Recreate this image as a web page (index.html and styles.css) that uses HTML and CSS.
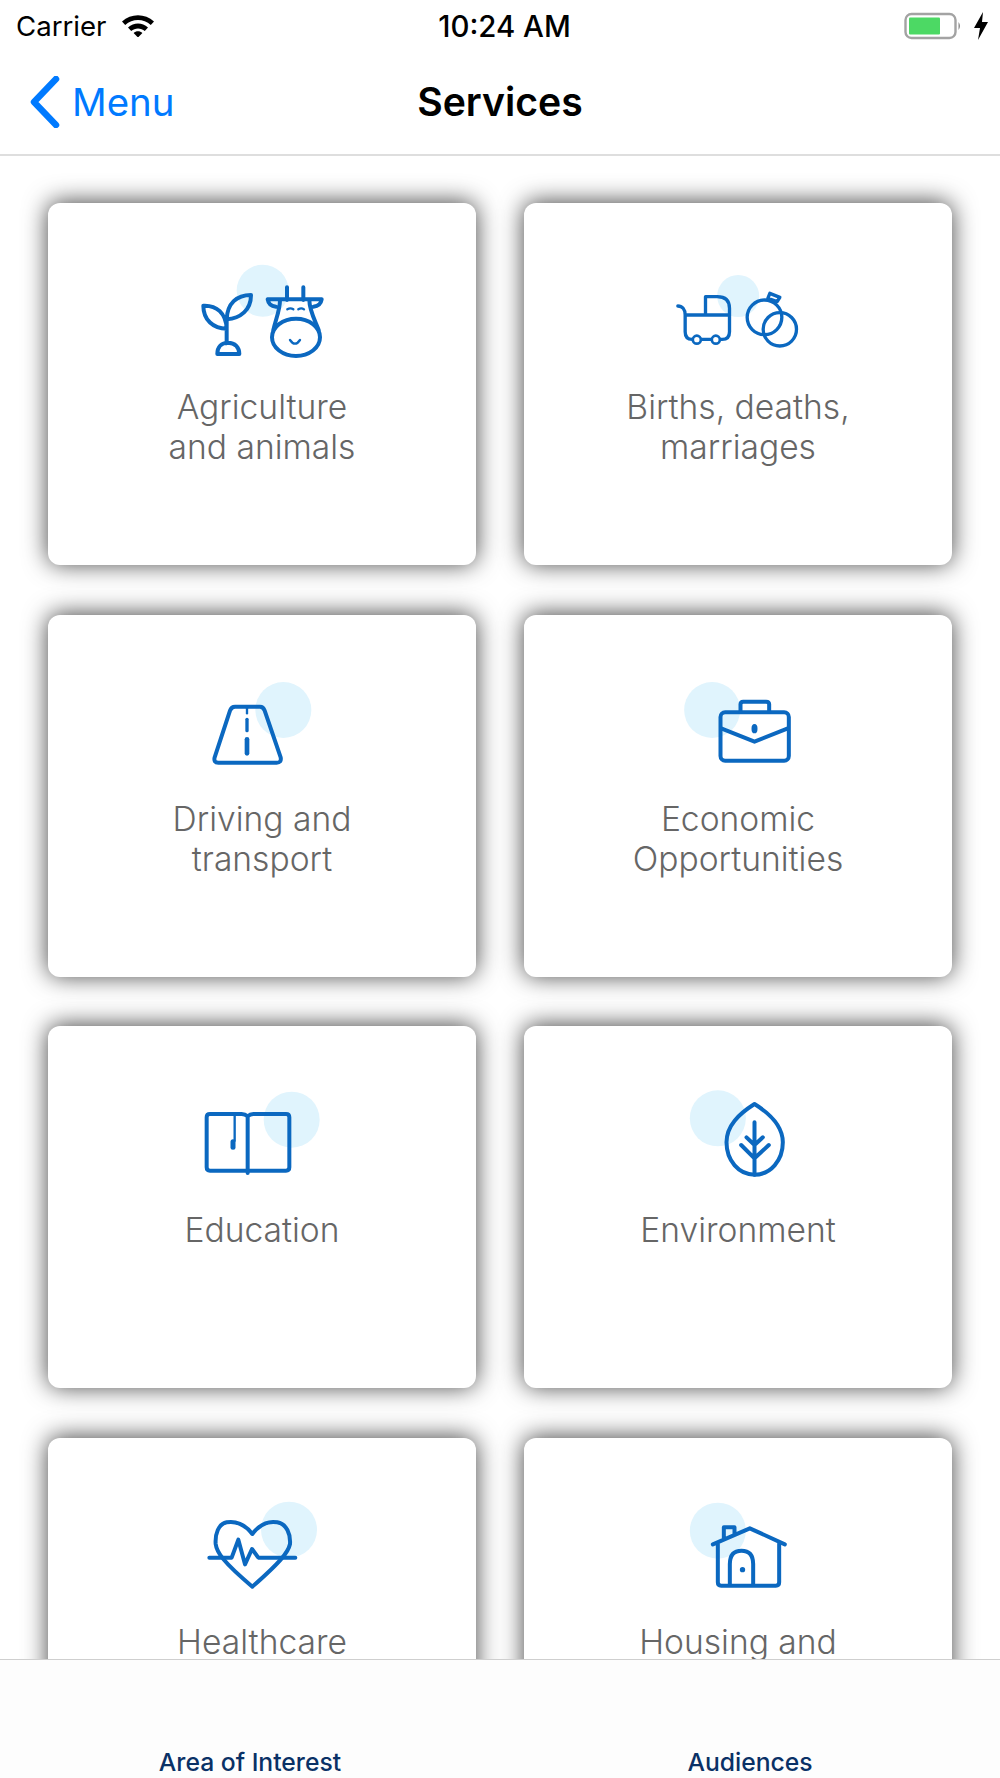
FILE: index.html
```html
<!DOCTYPE html>
<html lang="en">
<head>
<meta charset="utf-8">
<title>Services</title>
<link rel="stylesheet" href="styles.css">
</head>
<body>
<div class="screen">
  <header class="status">
    <div class="status-left">
      <span>Carrier</span>
      <svg class="wifi" viewBox="0 0 34 24"><path d="M1 8.5C10 0 24 0 33 8.5L29.8 12C22.5 5.2 11.5 5.2 4.2 12Z"/><path d="M7 14.5C12.8 9.2 21.2 9.2 27 14.5L23.8 18C20 14.6 14 14.6 10.2 18Z"/><path d="M12.6 20C15 17.8 19 17.8 21.4 20L17 24.5Z"/></svg>
    </div>
    <div class="status-time">10:24 AM</div>
    <div class="status-right">
      <svg class="battery" viewBox="0 0 58 28"><rect x="1.5" y="2" width="50" height="24" rx="6" fill="#fff" stroke="#a3a3a3" stroke-width="2.4"/><rect x="5" y="5.5" width="31" height="17" rx="1" fill="#4cd964"/><path d="M54.5 10Q57.5 14 54.5 18Z" fill="#8a8a8a"/></svg>
      <svg class="bolt" viewBox="0 0 14 28"><path d="M9 0L0 16H6L4 28L14 10H8Z"/></svg>
    </div>
  </header>
  <nav class="navbar">
    <div class="back">
      <svg class="chevron" viewBox="0 0 30 52"><path d="M26 3L4 26L26 49" /></svg>
      <span>Menu</span>
    </div>
    <div class="nav-title">Services</div>
  </nav>
  <main class="content">
    <div class="grid">
      <a class="card">
        <svg class="icon" viewBox="0 0 600 360"><g transform="translate(24 0)">
          <circle class="blob" cx="278" cy="122" r="78"/>
          <path d="M100 167C140 165 168 190 170 236C130 236 100 210 100 167ZM243 135C200 135 172 160 170 208C212 205 243 180 243 135ZM170 200V280M142 312C142 290 155 278 174 278C195 278 208 292 208 312Z"/>
          <path d="M351 112V150M400 112V150M293 148H455M293 148C295 160 300 168 318 170M455 148C453 160 448 168 430 170M330 150C330 180 318 205 310 240M418 150C418 180 432 205 446 240"/>
          <ellipse cx="378" cy="262" rx="72" ry="56"/>
          <path d="M352 178Q361 172 370 178M385 178Q394 172 402 178M360 270Q375 292 390 270" stroke-width="7"/>
        </g></svg>
        <div class="label">Agriculture<br>and animals</div>
      </a>
      <a class="card">
        <svg class="icon thin" viewBox="0 0 600 360"><g transform="translate(37.5 30)">
          <circle class="blob" cx="263" cy="108" r="63"/>
          <path d="M82 138C95 138 104 148 104 165V215Q104 238 125 238H215Q237 238 237 215V145Q237 110 200 110H165V165M104 165H237"/>
          <circle class="hole" cx="139" cy="239" r="12"/><circle class="hole" cx="196" cy="239" r="12"/>
          <circle cx="342" cy="172" r="52"/><circle cx="388" cy="208" r="50"/>
          <path d="M358 100L388 112L380 125L352 115Z"/>
        </g></svg>
        <div class="label">Births, deaths,<br>marriages</div>
      </a>
      <a class="card">
        <svg class="icon" viewBox="0 0 600 360"><g transform="translate(84 24)">
          <circle class="blob" cx="280" cy="120" r="84"/>
          <path d="M135 110H210Q220 110 224 122L272 262Q275 278 260 278H85Q70 278 74 262L120 122Q124 110 135 110Z"/>
          <path d="M171 115V130" stroke-width="7"/><path d="M171 148V182" stroke-width="10"/><path d="M171 208V250" stroke-width="14"/>
        </g></svg>
        <div class="label">Driving and<br>transport</div>
      </a>
      <a class="card">
        <svg class="icon" viewBox="0 0 600 360"><g transform="translate(97.5 24)">
          <circle class="blob" cx="125" cy="120" r="84"/>
          <rect x="150" y="127" width="205" height="145" rx="14"/>
          <path d="M210 125V103Q210 95 218 95H287Q296 95 296 103V125M152 175L252 215L352 175"/>
          <ellipse class="solid" cx="252" cy="176" rx="9" ry="14"/>
        </g></svg>
        <div class="label">Economic<br>Opportunities</div>
      </a>
      <a class="card">
        <svg class="icon" viewBox="0 0 600 360"><g transform="translate(84 18)">
          <circle class="blob" cx="305" cy="122" r="84"/>
          <path d="M173 112Q165 105 155 105H60Q50 105 50 115V265Q50 275 60 275H288Q298 275 298 265V115Q298 105 288 105H190Q180 105 173 112V282"/>
          <path d="M134 110V185" stroke-width="7"/><path d="M129 188V205" stroke-width="15"/>
        </g></svg>
        <div class="label">Education</div>
      </a>
      <a class="card">
        <svg class="icon" viewBox="0 0 600 360"><g transform="translate(97.5 18)">
          <circle class="blob" cx="142" cy="118" r="84"/>
          <path d="M252 75C300 105 337 140 337 190C337 245 300 287 252 287C205 287 168 245 168 190C168 140 205 105 252 75Z"/>
          <path d="M252 130V287M228 175L252 198L277 175M212 198L252 238L295 198"/>
        </g></svg>
        <div class="label">Environment</div>
      </a>
      <a class="card">
        <svg class="icon" viewBox="0 0 600 360"><g transform="translate(84 12)">
          <circle class="blob" cx="297" cy="122" r="84"/>
          <path d="M187 135C165 105 135 95 110 100C85 105 75 135 77 165C80 190 100 220 187 293C270 220 295 190 300 165C302 135 290 105 262 100C235 95 210 105 187 135Z"/>
          <path d="M58 206H125L145 152L165 226L186 180L205 206H316"/>
        </g></svg>
        <div class="label">Healthcare</div>
      </a>
      <a class="card">
        <svg class="icon" viewBox="0 0 600 360"><g transform="translate(97.5 12)">
          <circle class="blob" cx="142" cy="125" r="84"/>
          <path d="M127 166L238 118L343 166M142 160V280Q142 290 152 290H316Q326 290 326 280V160M178 290V225Q178 185 213 185Q248 185 248 225V290M160 148V115H192V135"/>
          <circle class="solid" cx="216" cy="242" r="8"/>
        </g></svg>
        <div class="label">Housing and</div>
      </a>
    </div>
  </main>
  <footer class="tabbar">
    <div class="tab">Area of Interest</div>
    <div class="tab">Audiences</div>
  </footer>
</div>
</body>
</html>
```

FILE: styles.css
```css
* { box-sizing: border-box; }
html, body { margin: 0; padding: 0; background: #fff; }
.screen {
  width: 1000px;
  height: 1778px;
  display: flex;
  flex-direction: column;
  overflow: hidden;
  font-family: Inter, "Liberation Sans", sans-serif;
}
.status {
  height: 52px;
  display: grid;
  grid-template-columns: 1fr auto 1fr;
  align-items: center;
  padding: 0 12px 0 16px;
  font-size: 27.6px;
  color: #000;
  flex: none;
}
.status-left { display: flex; align-items: center; gap: 15px; }
.wifi { width: 34px; height: 24px; fill: #000; margin-bottom: 3px; }
.status-time { font-size: 29.4px; font-weight: 500; margin-left: 5px; }
.status-right { display: flex; align-items: center; justify-content: flex-end; gap: 12px; }
.battery { width: 58px; height: 28px; }
.bolt { width: 14px; height: 28px; fill: #000; }
.navbar {
  height: 104px;
  flex: none;
  border-bottom: 2px solid #dedede;
  display: grid;
  grid-template-columns: 1fr auto 1fr;
  align-items: center;
  padding: 0 30px 2px;
}
.back { display: flex; align-items: center; gap: 12px; color: #007aff; font-size: 38.4px; }
.chevron { width: 30px; height: 52px; fill: none; stroke: #007aff; stroke-width: 6.5; stroke-linecap: round; stroke-linejoin: round; }
.nav-title { font-size: 39.2px; font-weight: 600; color: #000; margin-bottom: 2px; }
.content { flex: 1; min-height: 0; overflow: hidden; padding: 47px 48px 0; }
.grid {
  display: grid;
  grid-template-columns: 428px 428px;
  grid-auto-rows: 362px;
  gap: 49.5px 48px;
}
.card {
  background: #fff;
  border-radius: 12px;
  box-shadow: 0 -1px 24px rgba(0, 0, 0, 0.74);
  padding-top: 47px;
  text-align: center;
  display: block;
}
.icon {
  display: block;
  width: 200px;
  height: 120px;
  margin: 0 auto;
  fill: none;
  stroke: #0b68c0;
  stroke-width: 12;
  stroke-linecap: round;
  stroke-linejoin: round;
}
.icon.thin { stroke-width: 10; }
.icon .blob { fill: #e0f4fd; stroke: none; }
.icon .solid { fill: #0b68c0; stroke: none; }
.icon .hole { fill: #fff; stroke-width: 8; }
.label {
  margin-top: 17px;
  font-size: 33.6px;
  font-weight: 350;
  line-height: 40px;
  color: #666;
}
.tabbar {
  height: 119px;
  flex: none;
  background: #fdfdfd;
  border-top: 1.5px solid #cfcfcf;
  display: grid;
  grid-template-columns: 1fr 1fr;
  align-items: end;
  text-align: center;
  padding-bottom: 1px;
}
.tab { font-size: 24.7px; font-weight: 500; color: #0a3166; line-height: 30px; }
```
